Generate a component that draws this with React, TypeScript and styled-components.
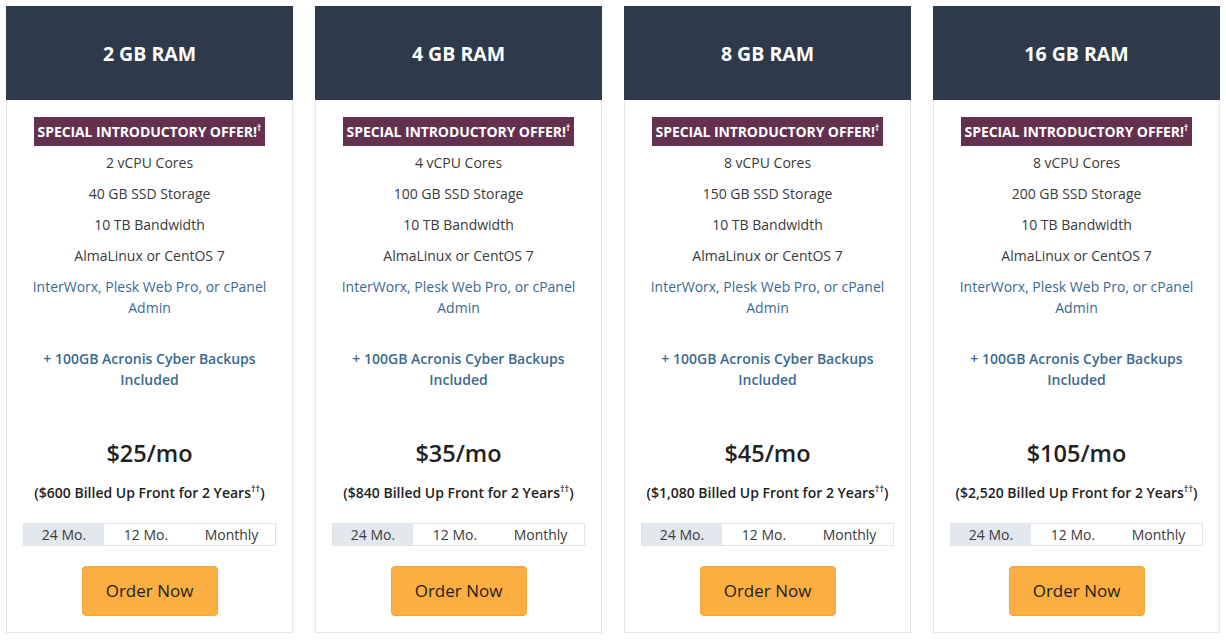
import React from "react";
import styled, { createGlobalStyle } from "styled-components";

const Global = createGlobalStyle`
  html, body { margin: 0; padding: 0; background: #ffffff; }
  body { font-family: "Open Sans", "Liberation Sans", sans-serif; color: #333; }
  * { box-sizing: border-box; }
`;

const Grid = styled.div`
  display: grid;
  grid-template-columns: repeat(4, 287px);
  column-gap: 22px;
  padding: 6px;
`;

const Card = styled.div`
  border: 1px solid #e3e5e8;
  border-top: none;
  display: flex;
  flex-direction: column;
  align-items: center;
  height: 627px;
`;

const Header = styled.div`
  align-self: stretch;
  margin: 0 -1px;
  height: 94px;
  background: #2e3a4a;
  color: #fff;
  font-weight: 700;
  font-size: 19.5px;
  display: flex;
  align-items: center;
  justify-content: center;
`;

const Badge = styled.div`
  margin-top: 17px;
  background: #63304f;
  color: #fff;
  font-weight: 700;
  font-size: 14px;
  height: 29px;
  line-height: 29px;
  padding: 0 4px;
  text-transform: uppercase;
  white-space: nowrap;
  letter-spacing: -0.1px;
`;

const Sup = styled.sup`
  font-size: 9px;
  line-height: 0;
  vertical-align: 6px;
`;

const Features = styled.div`
  margin-top: 6px;
  display: flex;
  flex-direction: column;
  align-items: center;
  gap: 10px;
  width: 100%;
  padding: 0 20px;
`;

const Feature = styled.div<{ $link?: boolean }>`
  font-size: 14px;
  line-height: 21px;
  text-align: center;
  color: ${(p) => (p.$link ? "#3a6a92" : "#3a3a3a")};
`;

const Backup = styled.div`
  margin-top: 30px;
  font-size: 14px;
  line-height: 21px;
  font-weight: 600;
  color: #3a6a92;
  text-align: center;
  width: 240px;
`;

const Price = styled.div`
  margin-top: 48px;
  font-size: 23.5px;
  line-height: 30px;
  font-weight: 600;
  color: #222;
`;

const Billed = styled.div`
  margin-top: 14px;
  font-size: 14px;
  line-height: 21px;
  font-weight: 600;
  color: #222;
`;

const Toggle = styled.div`
  margin-top: 20px;
  width: 253px;
  height: 23px;
  border: 1px solid #dfe2e6;
  display: grid;
  grid-template-columns: 80px 84px 1fr;
`;

const Seg = styled.div<{ $active?: boolean }>`
  background: ${(p) => (p.$active ? "#e3e8ef" : "#fff")};
  font-size: 14px;
  line-height: 21px;
  text-align: center;
  color: #3a3a3a;
`;

const Order = styled.button`
  margin-top: 20px;
  width: 136px;
  height: 50px;
  border: 1px solid #f3a73a;
  border-radius: 4px;
  background: #fbae42;
  color: #1e1e1e;
  font-family: "Open Sans", "Liberation Sans", sans-serif;
  font-size: 17px;
  padding: 0 0 2px;
  cursor: pointer;
`;

const plans = [
  { ram: "2 GB RAM", cpu: "2 vCPU Cores", ssd: "40 GB SSD Storage", price: "$25/mo", up: "$600" },
  { ram: "4 GB RAM", cpu: "4 vCPU Cores", ssd: "100 GB SSD Storage", price: "$35/mo", up: "$840" },
  { ram: "8 GB RAM", cpu: "8 vCPU Cores", ssd: "150 GB SSD Storage", price: "$45/mo", up: "$1,080" },
  { ram: "16 GB RAM", cpu: "8 vCPU Cores", ssd: "200 GB SSD Storage", price: "$105/mo", up: "$2,520" },
];

export default function App() {
  return (
    <>
      <Global />
      <Grid>
        {plans.map((p) => (
          <Card key={p.ram}>
            <Header>{p.ram}</Header>
            <Badge>
              Special Introductory Offer!<Sup>†</Sup>
            </Badge>
            <Features>
              <Feature>{p.cpu}</Feature>
              <Feature>{p.ssd}</Feature>
              <Feature>10 TB Bandwidth</Feature>
              <Feature>AlmaLinux or CentOS 7</Feature>
              <Feature $link>InterWorx, Plesk Web Pro, or cPanel Admin</Feature>
            </Features>
            <Backup>+ 100GB Acronis Cyber Backups Included</Backup>
            <Price>{p.price}</Price>
            <Billed>
              ({p.up} Billed Up Front for 2 Years<Sup>††</Sup>)
            </Billed>
            <Toggle>
              <Seg $active>24 Mo.</Seg>
              <Seg>12 Mo.</Seg>
              <Seg>Monthly</Seg>
            </Toggle>
            <Order>Order Now</Order>
          </Card>
        ))}
      </Grid>
    </>
  );
}
